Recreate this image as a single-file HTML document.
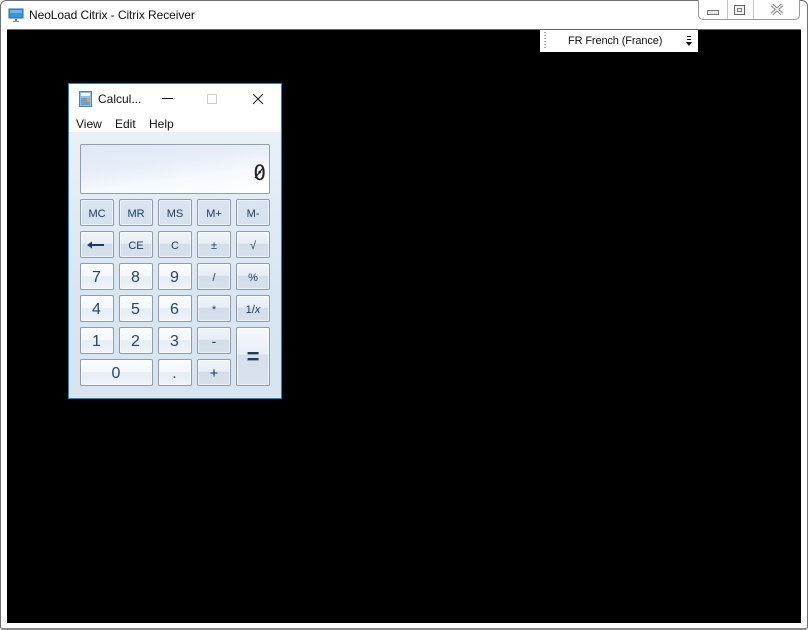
<!DOCTYPE html>
<html><head><meta charset="utf-8"><style>
html,body{margin:0;padding:0;background:#fff}
body{width:808px;height:630px;position:relative;overflow:hidden;font-family:"Liberation Sans",sans-serif}
div,span,svg{position:absolute;box-sizing:border-box}
#win{left:0;top:0;width:808px;height:630px;background:#fff;border:1px solid #707070;border-bottom:2px solid #8a8a8a;border-radius:6px 6px 3px 3px}
#client{left:7px;top:29px;width:794px;height:594px;background:#000;border-top:1px solid #6a6a6a}
#title{left:29px;top:7px;font-size:12px;line-height:16px;color:#111;white-space:nowrap;letter-spacing:-.07px}
#caps{left:698px;top:0;width:102px;height:20px;border:1px solid #9a9a9a;border-top:none;border-radius:0 0 5px 5px;background:#fff}
#lang{left:540px;top:30px;width:158px;height:22px;background:#fff}
#lang .t{left:28px;top:4px;font-size:11px;line-height:14px;color:#111;white-space:nowrap;letter-spacing:-.13px}
#calc{left:68px;top:83px;width:214px;height:316px;background:#dce7f2;border:1px solid #1a86d6}
#top{left:0;top:0;width:212px;height:48px;background:#fff}
.m{font-size:12px;line-height:14px;color:#111;white-space:nowrap;top:33px}
#body{left:0;top:48px;width:212px;height:266px;background:linear-gradient(#eaf0f8,#d9e5f1 60%,#d8e4f0)}
#disp{left:11px;top:60px;width:190px;height:50px;border:1px solid #8e9fb2;border-radius:2px;background:linear-gradient(172deg,#dfe8f6 0%,#e6edf8 35%,#f6f9fd 65%,#fff 100%)}
#disp span{right:3px;top:16px;font:21px/24px "DejaVu Sans Mono",monospace;color:#222}
.b{width:34px;height:27px;border:1px solid #8d9cae;border-radius:2px;box-shadow:inset 0 0 0 1px rgba(255,255,255,.55);color:#1e395b;font-size:11px;text-align:center;line-height:28px;background:linear-gradient(#f2f6fa,#e6edf5 46%,#d3deea 48%,#d6e1ec)}
.l{background:linear-gradient(#fbfcfe,#f4f7fb 48%,#e6edf5 50%,#eef3f9);font-size:16px;color:#2c4566;padding-right:1px;line-height:28px}
.g{background:linear-gradient(#d9e4f0,#d5e1ed)}
</style></head><body>
<div id="win"></div>
<svg style="left:8px;top:8px" width="16" height="15" viewBox="0 0 16 15"><rect x="1" y="1" width="14" height="9" fill="#3a94d8" stroke="#2a6a9e"/><rect x="2" y="2" width="12" height="3" fill="#6db7ea"/><rect x="7" y="11" width="2" height="2" fill="#777"/><rect x="5" y="13" width="6" height="1" fill="#999"/></svg>
<div id="title">NeoLoad Citrix - Citrix Receiver</div>
<div id="caps">
<div style="left:28px;top:0;width:1px;height:19px;background:#c4c4c4"></div>
<div style="left:54px;top:0;width:1px;height:19px;background:#c4c4c4"></div>
<div style="left:8px;top:10px;width:12px;height:5px;border:1px solid #777;background:#e8e8e8"></div>
<div style="left:35px;top:5px;width:11px;height:10px;border:1px solid #666;background:#f2f2f2"></div>
<div style="left:38px;top:8px;width:5px;height:4px;border:1px solid #777"></div>
<svg style="left:71px;top:4px" width="14" height="11" viewBox="0 0 14 11"><path d="M2 1L12 10M12 1L2 10" stroke="#888" stroke-width="3.4" fill="none"/><path d="M2 1L12 10M12 1L2 10" stroke="#f4f4f4" stroke-width="1.4" fill="none"/></svg>
</div>
<div id="client"></div>
<div id="lang">
<div style="left:4px;top:2px;width:2px;height:18px;background:repeating-linear-gradient(#aaa 0 1px,#fff 1px 3px)"></div>
<div class="t">FR French (France)</div>
<svg style="left:146px;top:6px" width="6" height="11" viewBox="0 0 6 11"><rect x="1" y="0" width="4" height="1" fill="#111"/><rect x="1" y="3" width="4" height="1" fill="#111"/><path d="M0 6H6L3 10Z" fill="#111"/></svg>
</div>
<div id="calc">
<div id="top">
<svg style="left:10px;top:7px" width="13" height="16" viewBox="0 0 13 16"><rect x=".5" y=".5" width="12" height="15" fill="#8cc0e8" stroke="#4a86b8"/><rect x="2" y="2" width="9" height="3" fill="#f0f6fc"/><rect x="2" y="7" width="9" height="7" fill="#6f9fc8"/><rect x="8" y="7" width="3" height="4" fill="#f0a030"/></svg>
<div class="m" style="left:29px;top:8px">Calcul...</div>
<div style="left:93px;top:14px;width:11px;height:1px;background:#111"></div>
<div style="left:138px;top:10px;width:10px;height:10px;border:1px solid #ccc"></div>
<svg style="left:183px;top:9px" width="12" height="12" viewBox="0 0 12 12"><path d="M1 1L11 11M11 1L1 11" stroke="#222" stroke-width="1" fill="none"/></svg>
<div class="m" style="left:7px">View</div>
<div class="m" style="left:46px">Edit</div>
<div class="m" style="left:80px">Help</div>
</div>
<div id="body"></div>
<div id="disp"><span>0</span><svg style="left:172px;top:20px" width="12" height="16" viewBox="0 0 12 16"><path d="M2 13L10 3" stroke="#222" stroke-width="1.3" fill="none"/></svg></div>
<div class="b g" style="left:11px;top:115px">MC</div>
<div class="b g" style="left:50px;top:115px">MR</div>
<div class="b g" style="left:89px;top:115px">MS</div>
<div class="b g" style="left:128px;top:115px">M+</div>
<div class="b g" style="left:167px;top:115px">M-</div>
<div class="b" style="left:11px;top:147px"><svg style="left:6px;top:9px" width="18" height="8" viewBox="0 0 18 8"><path d="M0 4L5 .5V3H17V5H5V7.5Z" fill="#1e395b"/></svg></div>
<div class="b" style="left:50px;top:147px">CE</div>
<div class="b" style="left:89px;top:147px">C</div>
<div class="b" style="left:128px;top:147px">±</div>
<div class="b" style="left:167px;top:147px">√</div>
<div class="b l" style="left:11px;top:179px">7</div>
<div class="b l" style="left:50px;top:179px">8</div>
<div class="b l" style="left:89px;top:179px">9</div>
<div class="b" style="left:128px;top:179px">/</div>
<div class="b" style="left:167px;top:179px">%</div>
<div class="b l" style="left:11px;top:211px">4</div>
<div class="b l" style="left:50px;top:211px">5</div>
<div class="b l" style="left:89px;top:211px">6</div>
<div class="b" style="left:128px;top:211px">*</div>
<div class="b" style="left:167px;top:211px">1/<i>x</i></div>
<div class="b l" style="left:11px;top:243px">1</div>
<div class="b l" style="left:50px;top:243px">2</div>
<div class="b l" style="left:89px;top:243px">3</div>
<div class="b" style="left:128px;top:243px;font-size:14px;line-height:26px">-</div>
<div class="b" style="left:167px;top:243px;height:59px;line-height:58px;font-size:22px;font-weight:bold;background:linear-gradient(#f6f9fd,#e8eff6 46%,#d5e0eb 47%,#d8e3ee)">=</div>
<div class="b l" style="left:11px;top:275px;width:73px">0</div>
<div class="b l" style="left:89px;top:275px">.</div>
<div class="b" style="left:128px;top:275px;font-size:15px">+</div>
</div>
</body></html>
